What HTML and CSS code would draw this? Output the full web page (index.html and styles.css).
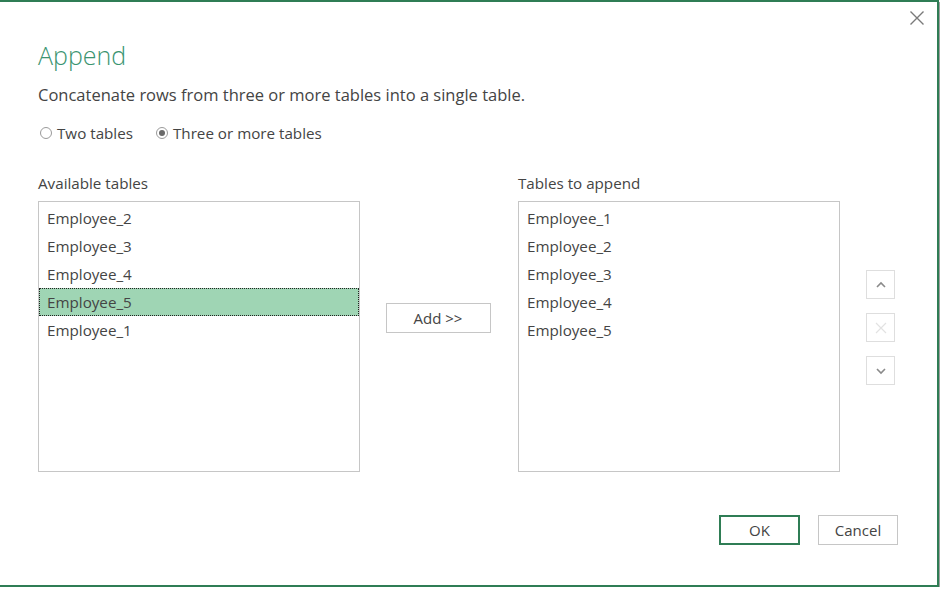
FILE: index.html
```html
<!DOCTYPE html>
<html>
<head>
<meta charset="utf-8">
<link rel="stylesheet" href="styles.css">
</head>
<body>
<div class="dialog">
  <div class="close" aria-label="Close">
    <svg width="16" height="16" viewBox="0 0 16 16"><path d="M1.5 1.5 L14.5 14.5 M14.5 1.5 L1.5 14.5" stroke="#7a7a7a" stroke-width="1.4" fill="none"/></svg>
  </div>
  <h1 class="title">Append</h1>
  <p class="desc">Concatenate rows from three or more tables into a single table.</p>
  <div class="radios">
    <label class="radio"><span class="dot"></span>Two tables</label>
    <label class="radio"><span class="dot checked"></span>Three or more tables</label>
  </div>
  <div class="main">
    <div class="col">
      <div class="label">Available tables</div>
      <ul class="list">
        <li>Employee_2</li>
        <li>Employee_3</li>
        <li>Employee_4</li>
        <li class="selected">Employee_5</li>
        <li>Employee_1</li>
      </ul>
    </div>
    <div class="mid">
      <button class="btn add">Add &gt;&gt;</button>
    </div>
    <div class="col">
      <div class="label">Tables to append</div>
      <ul class="list">
        <li>Employee_1</li>
        <li>Employee_2</li>
        <li>Employee_3</li>
        <li>Employee_4</li>
        <li>Employee_5</li>
      </ul>
    </div>
    <div class="side">
      <div class="sbtn"><svg width="14" height="14" viewBox="0 0 14 14"><path d="M3 9 L7 5 L11 9" stroke="#8a8a8a" stroke-width="1.6" fill="none"/></svg></div>
      <div class="sbtn"><svg width="14" height="14" viewBox="0 0 14 14"><path d="M2 2 L12 12 M12 2 L2 12" stroke="#e2e2e2" stroke-width="1.2" fill="none"/></svg></div>
      <div class="sbtn"><svg width="14" height="14" viewBox="0 0 14 14"><path d="M3 5 L7 9 L11 5" stroke="#8a8a8a" stroke-width="1.6" fill="none"/></svg></div>
    </div>
  </div>
  <div class="footer">
    <button class="btn ok">OK</button>
    <button class="btn cancel">Cancel</button>
  </div>
</div>
</body>
</html>
```
FILE: styles.css
```css
html, body {
  margin: 0;
  padding: 0;
  background: #ffffff;
}
body {
  font-family: "Open Sans", "Noto Sans", sans-serif;
  color: #444444;
}
.dialog {
  position: relative;
  box-sizing: border-box;
  width: 939px;
  height: 587px;
  background: #fff;
  border-top: 2px solid #2f7d55;
  border-right: 2px solid #2f7d55;
  border-bottom: 2px solid #2f7d55;
  box-shadow: 2px 2px 0 #a0a0a0;
  padding: 0 0 0 38px;
}
.close {
  position: absolute;
  top: 8px;
  right: 12px;
  width: 16px;
  height: 16px;
}
.close svg { display: block; }
.title {
  margin: 37px 0 0 0;
  font-size: 25px;
  font-weight: 300;
  line-height: 32px;
  color: #3a9470;
}
.desc {
  margin: 12px 0 0 0;
  font-size: 16.5px;
  line-height: 24px;
  color: #444;
}
.radios {
  display: flex;
  gap: 21px;
  margin-top: 15px;
  font-size: 15.2px;
  line-height: 22px;
}
.radio {
  display: flex;
  align-items: center;
  gap: 5px;
}
.dot {
  box-sizing: border-box;
  width: 12px;
  height: 12px;
  border: 1px solid #9a9a9a;
  border-radius: 50%;
  margin-left: 2px;
  position: relative;
}
.dot.checked::after {
  content: "";
  position: absolute;
  left: 2px;
  top: 2px;
  width: 6px;
  height: 6px;
  border-radius: 50%;
  background: #6a6a6a;
}
.main {
  display: flex;
  margin-top: 28px;
}
.col {
  display: flex;
  flex-direction: column;
  width: 322px;
}
.label {
  font-size: 15.2px;
  line-height: 22px;
  height: 22px;
  margin-bottom: 7px;
}
.list {
  box-sizing: border-box;
  width: 322px;
  height: 271px;
  border: 1px solid #c6c6c6;
  margin: 0;
  padding: 2px 0 0 0;
  list-style: none;
}
.list li {
  box-sizing: border-box;
  height: 28px;
  line-height: 26px;
  padding-left: 7px;
  font-size: 15.2px;
  border: 1px dotted transparent;
}
.list li.selected {
  background: #9fd5b4;
  border: 1px dotted #222;
}
.mid {
  width: 158px;
  display: flex;
  justify-content: center;
  align-items: flex-start;
  padding-top: 131px;
  box-sizing: border-box;
}
.btn {
  font-family: "Open Sans", "Noto Sans", sans-serif;
  color: #444;
  background: #fff;
  box-sizing: border-box;
  border: 1px solid #c6c6c6;
  font-size: 15px;
  padding: 0;
  height: 30px;
}
.add {
  width: 105px;
  height: 30px;
  margin-left: -2px;
}
.side {
  display: flex;
  flex-direction: column;
  gap: 14px;
  margin-left: 26px;
  padding-top: 98px;
}
.sbtn {
  box-sizing: border-box;
  width: 29px;
  height: 29px;
  border: 1px solid #dedede;
  display: flex;
  align-items: center;
  justify-content: center;
}
.sbtn svg { display: block; }
.footer {
  display: flex;
  justify-content: flex-end;
  gap: 18px;
  margin-top: 43px;
  padding-right: 39px;
}
.ok {
  width: 81px;
  border: 1px solid #2f7d55;
  box-shadow: inset 0 0 0 1px #2f7d55;
}
.cancel {
  width: 80px;
}
```
